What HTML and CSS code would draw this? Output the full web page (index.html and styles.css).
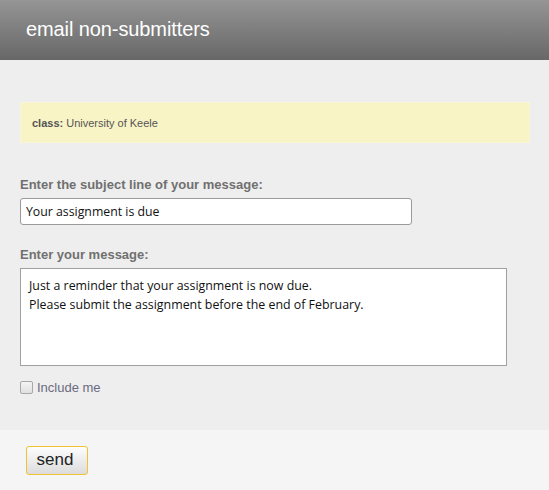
FILE: index.html
```html
<!DOCTYPE html>
<html>
<head>
<meta charset="utf-8">
<link rel="stylesheet" href="styles.css">
</head>
<body>
<div class="header"><h1 class="title">email non-submitters</h1></div>
<div class="main">
  <div class="info"><b>class:</b> University of Keele</div>
  <label class="label">Enter the subject line of your message:</label>
  <input class="subject" type="text" value="Your assignment is due">
  <label class="label label2">Enter your message:</label>
  <textarea class="message">Just a reminder that your assignment is now due.
Please submit the assignment before the end of February.</textarea>
  <div class="check"><span class="box"></span><span class="check-text">Include me</span></div>
</div>
<div class="footer"><button class="send">send</button></div>
</body>
</html>
```
FILE: styles.css
```css
html, body { margin: 0; padding: 0; }
body { width: 549px; height: 490px; background: #f5f5f5; font-family: "Liberation Sans", Arial, sans-serif; overflow: hidden; }
.header { height: 60px; background: linear-gradient(#959595, #676767); display: flex; align-items: center; padding-left: 26px; box-sizing: border-box; }
.title { margin: 0; font-size: 20px; font-weight: normal; color: #fff; padding-bottom: 2px; letter-spacing: -0.1px; }
.main { background: #eeeeee; height: 370px; padding: 42px 19px 0 20px; box-sizing: border-box; display: flex; flex-direction: column; align-items: flex-start; }
.info { width: 510px; height: 41px; box-sizing: border-box; background: #f8f4c6; border: 1px solid #f9f6d8; font-size: 11px; color: #555; padding-left: 11px; display: flex; align-items: center; }
.info b { margin-right: 3px; }
.label { font-size: 13px; font-weight: bold; color: #707070; margin-top: 34px; line-height: 15px; }
.label2 { margin-top: 22px; }
.subject { margin: 6px 0 0 0; width: 392px; height: 27px; box-sizing: border-box; border: 1px solid #9a9a9a; border-radius: 3px; background: #fff; font-family: "Open Sans", "Noto Sans", sans-serif; font-size: 12.3px; color: #111; padding: 0 5px; }
.message { margin: 6px 0 0 0; width: 487px; height: 98px; box-sizing: border-box; border: 1px solid #a0a0a0; background: #fff; font-family: "Open Sans", "Noto Sans", sans-serif; font-size: 12.4px; line-height: 19px; color: #111; padding: 7px 8px; resize: none; }
.check { display: flex; align-items: center; margin-top: 14px; }
.box { width: 11px; height: 11px; border: 1px solid #a8a8a8; border-radius: 2px; background: linear-gradient(#f4f4f4, #e0e0e0); }
.check-text { font-size: 13px; color: #6b6b80; margin-left: 4px; }
.footer { padding: 16px 0 0 26px; }
.send { width: 62px; height: 29px; border: 1px solid #f1c232; border-radius: 3px; background: linear-gradient(#fdfdfd, #dcdcdc); font-family: "Liberation Sans", Arial, sans-serif; font-size: 17px; color: #222; padding: 0 4px 2px 0; }
```
